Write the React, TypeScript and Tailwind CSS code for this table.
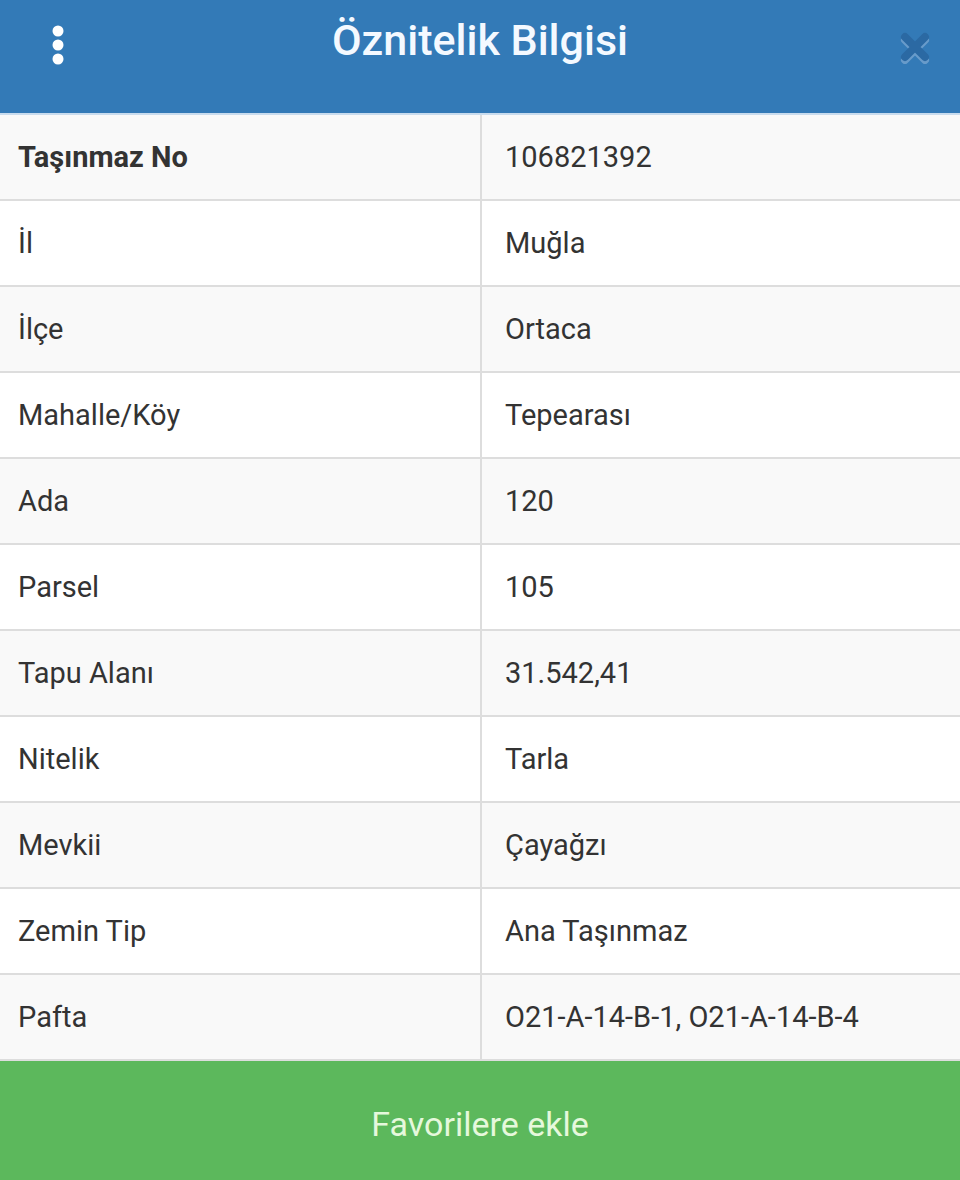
const rows: [string, string][] = [
  ["Taşınmaz No", "106821392"],
  ["İl", "Muğla"],
  ["İlçe", "Ortaca"],
  ["Mahalle/Köy", "Tepearası"],
  ["Ada", "120"],
  ["Parsel", "105"],
  ["Tapu Alanı", "31.542,41"],
  ["Nitelik", "Tarla"],
  ["Mevkii", "Çayağzı"],
  ["Zemin Tip", "Ana Taşınmaz"],
  ["Pafta", "O21-A-14-B-1, O21-A-14-B-4"],
];

export default function App() {
  return (
    <div className="flex h-[1180px] w-[960px] flex-col bg-white font-['Roboto',sans-serif]">
      {/* Header */}
      <div className="relative flex h-[115px] shrink-0 items-start justify-center bg-[#337ab7] border-b-2 border-[#c9dcee]">
        <div className="absolute left-[47px] top-[24px]">
          <svg width="22" height="42" viewBox="0 0 22 42">
            <circle cx="11" cy="7" r="5.5" fill="#fff" />
            <circle cx="11" cy="21" r="5.5" fill="#fff" />
            <circle cx="11" cy="35" r="5.5" fill="#fff" />
          </svg>
        </div>
        <h1 className="mt-[12px] text-[43px] font-medium leading-[56px] text-[#f4f9ff]">Öznitelik Bilgisi</h1>
        <div className="absolute right-[28px] top-[30px]">
          <svg width="34" height="34" viewBox="0 0 34 34">
            <g stroke="#7fa9d3" strokeWidth="8" strokeLinecap="round" opacity="0.7">
              <path d="M7 10 L27 30 M27 10 L7 30" />
            </g>
            <g stroke="#2b69a3" strokeWidth="8" strokeLinecap="round">
              <path d="M7 7 L27 27 M27 7 L7 27" />
            </g>
          </svg>
        </div>
      </div>

      {/* Table */}
      <div className="flex flex-col">
        {rows.map(([label, value], i) => (
          <div
            key={label}
            className={`grid h-[86px] grid-cols-[482px_1fr] border-b-2 border-[#dddddd] text-[29px] text-[#333333] ${
              i % 2 === 0 ? "bg-[#f9f9f9]" : "bg-white"
            }`}
          >
            <div className={`flex items-center border-r-2 border-[#dddddd] pl-[18px] pt-[2px] ${i === 0 ? "font-bold" : ""}`}>
              {label}
            </div>
            <div className="flex items-center pl-[23px] pt-[2px]">{value}</div>
          </div>
        ))}
      </div>

      {/* Button */}
      <div className="flex flex-1 items-center justify-center bg-[#5cb85c] pt-[8px]">
        <span className="text-[34px] text-[#e6f8dc]">Favorilere ekle</span>
      </div>
    </div>
  );
}
